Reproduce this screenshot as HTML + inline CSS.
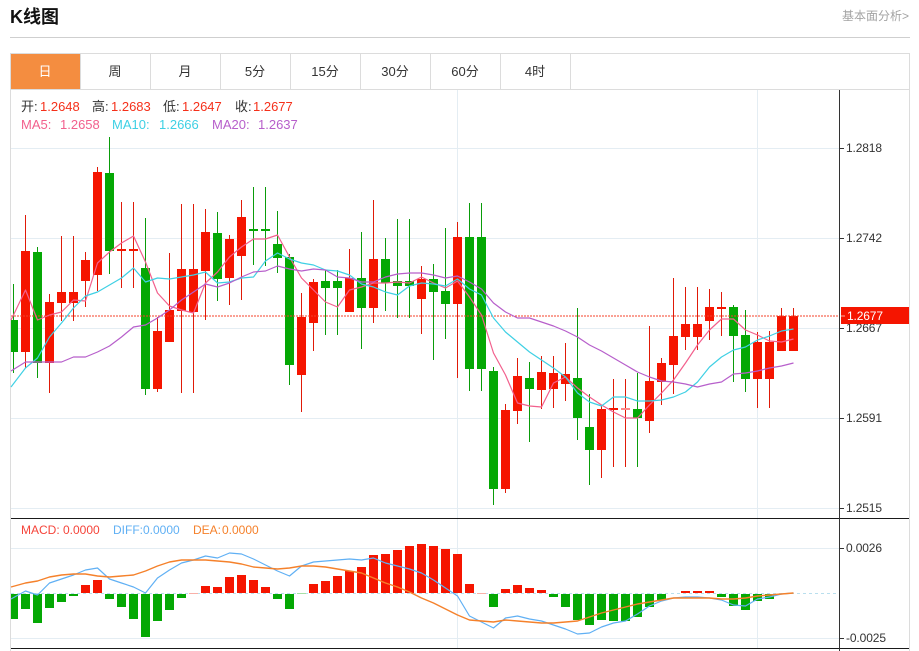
<!DOCTYPE html>
<html lang="zh">
<head>
<meta charset="utf-8">
<title>K线图</title>
<style>
html,body{margin:0;padding:0;background:#fff;width:919px;height:651px;overflow:hidden}
svg{display:block;position:absolute;left:0;top:0}
text{font-family:"Liberation Sans","Noto Sans CJK SC",sans-serif}
</style>
</head>
<body>
<svg width="919" height="651" viewBox="0 0 919 651" xmlns="http://www.w3.org/2000/svg">
<!-- header -->
<text x="10" y="23" font-size="18" font-weight="700" fill="#111">K线图</text>
<text x="842" y="20" font-size="12" fill="#a3a3a3">基本面分析&gt;</text>
<g shape-rendering="crispEdges">
<rect x="10" y="37" width="900" height="1" fill="#cfcfcf"/>
<!-- panel + tabs -->
<path d="M10.5 53V651M909.5 53V651M10 53.5H910M10 89.5H910M80.5 53V90M150.5 53V90M220.5 53V90M290.5 53V90M360.5 53V90M430.5 53V90M500.5 53V90M570.5 53V90" stroke="#dcdcdc" fill="none"/>
<rect x="11" y="54" width="69" height="35" fill="#f48d40"/>
<!-- grid -->
<path d="M11 148.5H839M11 238.5H839M11 328.5H839M11 418.5H839M11 508.5H839M11 548.5H839M11 638.5H839M457.5 90V648M757.5 90V648" stroke="#e4edf3" fill="none"/>
<!-- candles: wicks -->
<path fill="none" stroke="#e01a08" stroke-width="1" d="M25.5 215V368M49.5 294V393M61.5 236V321M73.5 236V321M85.5 252V307M97.5 167V291M121.5 202V288M133.5 202V288M157.5 317V392M169.5 253V342M181.5 204V393M193.5 204V393M205.5 209V320M229.5 235V305M241.5 200V300M301.5 293V412M313.5 279V351M349.5 249V312M373.5 200V323M421.5 266V334M457.5 222V378M505.5 404V493M517.5 358V424M541.5 356V409M553.5 356V408M565.5 343V401M601.5 406V478M613.5 379V467M625.5 379V467M649.5 326V433M661.5 358V405M673.5 278V394M685.5 287V350M697.5 287V350M709.5 289V340M721.5 292V336M757.5 332V408M769.5 331V408M781.5 308V351M793.5 308V351"/>
<path fill="none" stroke="#0a9c0a" stroke-width="1" d="M13.5 284V373M37.5 247V378M109.5 137V274M145.5 218V395M217.5 212V301M253.5 187V265M265.5 187V266M277.5 211V273M289.5 254V385M325.5 270V335M337.5 270V335M361.5 232V349M385.5 238V311M397.5 219V318M409.5 219V318M433.5 264V360M445.5 228V339M469.5 203V391M481.5 203V391M493.5 367V505M529.5 362V442M577.5 308V440M589.5 394V485M637.5 373V467M733.5 305V382M745.5 310V392"/>
<!-- candles: bodies -->
<path fill="none" stroke="#f51500" stroke-width="9" d="M25.5 251V352M49.5 302V363M61.5 292V303M73.5 292V303M85.5 260V281M97.5 172V275M121.5 249V251M133.5 249V251M157.5 331V389M169.5 310V342M181.5 269V311M193.5 269V312M205.5 232V271M229.5 239V278M241.5 217V256M301.5 317V375M313.5 282V323M349.5 278V312M373.5 259V308M421.5 279V299M457.5 237V304M505.5 410V489M517.5 376V411M541.5 372V390M553.5 373V389M565.5 374V384M601.5 409V450M613.5 408V410M649.5 381V421M661.5 363V382M673.5 336V365M685.5 324V337M697.5 324V337M709.5 307V321M721.5 307V309M757.5 342V379M769.5 342V379M781.5 316V351M793.5 316V351"/>
<path fill="none" stroke="#f88" stroke-width="9" d="M625.5 408V410"/>
<path fill="none" stroke="#04a804" stroke-width="9" d="M37.5 252V363M109.5 173V251M145.5 268V389M217.5 233V279M253.5 229V231M265.5 229V231M277.5 244V258M289.5 257V365M325.5 281V288M337.5 281V288M361.5 278V308M385.5 259V283M397.5 281V286M409.5 281V286M433.5 279V292M445.5 291V304M469.5 237V369M481.5 237V369M493.5 371V489M529.5 378V389M577.5 378V418M589.5 427V450M637.5 409V418M733.5 307V336M745.5 335V379"/>
<path fill="none" stroke="#04a804" stroke-width="7" d="M14.5 320V352"/>
<!-- MACD bars -->
<path fill="none" stroke="#b9dfee" stroke-dasharray="3 3" d="M11 593.5H836"/>
<path fill="none" stroke="#f51500" stroke-width="9" d="M85.5 585V593M97.5 580V593M205.5 586V593M217.5 587V593M229.5 577V593M241.5 575V593M253.5 580V593M265.5 587V593M313.5 584V593M325.5 581V593M337.5 576V593M349.5 571V593M361.5 567V593M373.5 555V593M385.5 554V593M397.5 550V593M409.5 546V593M421.5 544V593M433.5 546V593M445.5 549V593M457.5 554V593M469.5 584V593M505.5 589V593M517.5 585V593M529.5 588V593M541.5 590V593M685.5 591V593M697.5 591V593M709.5 591V593"/>
<path fill="none" stroke="#04a804" stroke-width="9" d="M25.5 594V609M37.5 594V623M49.5 594V608M61.5 594V602M73.5 594V596M109.5 594V599M121.5 594V607M133.5 594V619M145.5 594V637M157.5 594V621M169.5 594V610M181.5 594V598M277.5 594V599M289.5 594V609M493.5 594V607M553.5 594V597M565.5 594V607M577.5 594V620M589.5 594V625M601.5 594V620M613.5 594V621M625.5 594V621M637.5 594V617M649.5 594V607M661.5 594V600M721.5 594V597M733.5 594V606M745.5 594V610M757.5 594V601M769.5 594V599"/>
<path fill="none" stroke="#04a804" stroke-width="7" d="M14.5 594V619"/>
<path fill="none" stroke="#f9b0a8" stroke-width="9" d="M193.5 593H197M481.5 593H485" stroke-dasharray="none" opacity="0"/>
<path fill="none" stroke="#a6e0a6" d="M297 593.5H306"/>
<path fill="none" stroke="#f9b0a8" d="M189 593.5H198M477 593.5H486"/>
<!-- frame lines -->
<path d="M11 518.5H909M11 648.5H909" stroke="#1a1a1a" fill="none"/>
<path d="M839.5 90V651" stroke="#333" fill="none"/>
<path d="M839 148.5h5M839 238.5h5M839 328.5h5M839 418.5h5M839 508.5h5M839 548.5h5M839 638.5h5" stroke="#333" fill="none"/>
<path d="M11 316H839" stroke="#f4402a" stroke-dasharray="2 1" fill="none"/>
</g>
<!-- MA lines -->
<g fill="none" stroke-width="1.2" stroke-linejoin="round">
<polyline stroke="#f2608d" points="11,320 13.5,315 25.5,290 37.5,320 49.5,315 61.5,312 73.5,300 85.5,301 97.5,263 109.5,252 121.5,243 133.5,236 145.5,262 157.5,293 169.5,306 181.5,310 193.5,313 205.5,283 217.5,272 229.5,257 241.5,247 253.5,239 265.5,239 277.5,235 289.5,257 301.5,278 313.5,290 325.5,302 337.5,307 349.5,290 361.5,287 373.5,283 385.5,283 397.5,282 409.5,283 421.5,277 433.5,283 445.5,288 457.5,281 469.5,297 481.5,315 493.5,353 505.5,375 517.5,403 529.5,406 541.5,407 553.5,383 565.5,377 577.5,388 589.5,397 601.5,405 613.5,412 625.5,418 637.5,418 649.5,405 661.5,393 673.5,380 685.5,363 697.5,345 709.5,330 721.5,319 733.5,319 745.5,330 757.5,335 769.5,341 781.5,342 793.5,339"/>
<polyline stroke="#3fd0e4" points="11,387 25.5,368 37.5,358 49.5,337 61.5,323 73.5,308 85.5,296 97.5,292 109.5,285 121.5,278 133.5,268 145.5,282 157.5,278 169.5,279 181.5,277 193.5,275 205.5,272 217.5,283 229.5,282 241.5,278 253.5,277 265.5,261 277.5,253 289.5,259 301.5,263 313.5,265 325.5,270 337.5,271 349.5,275 361.5,284 373.5,287 385.5,292 397.5,295 409.5,286 421.5,283 433.5,284 445.5,286 457.5,279 469.5,289 481.5,295 493.5,318 505.5,332 517.5,342 529.5,352 541.5,360 553.5,368 565.5,377 577.5,393 589.5,402 601.5,406 613.5,397 625.5,397 637.5,401 649.5,401 661.5,400 673.5,397 685.5,392 697.5,382 709.5,367 721.5,357 733.5,350 745.5,347 757.5,340 769.5,336 781.5,331 793.5,329"/>
<polyline stroke="#b75fcb" points="11,371 25.5,362 37.5,362 49.5,362 61.5,362 73.5,357 85.5,357 97.5,352 109.5,346 121.5,337 133.5,327 145.5,325 157.5,318 169.5,310 181.5,300 193.5,292 205.5,284 217.5,287 229.5,283 241.5,277 253.5,272 265.5,271 277.5,266 289.5,269 301.5,271 313.5,269 325.5,270 337.5,277 349.5,278 361.5,282 373.5,282 385.5,277 397.5,274 409.5,273 421.5,273 433.5,275 445.5,278 457.5,276 469.5,282 481.5,289 493.5,303 505.5,312 517.5,318 529.5,318 541.5,322 553.5,326 565.5,331 577.5,337 589.5,345 601.5,351 613.5,358 625.5,365 637.5,372 649.5,377 661.5,381 673.5,382 685.5,384 697.5,387 709.5,384 721.5,382 733.5,374 745.5,373 757.5,371 769.5,368 781.5,366 793.5,363"/>
<polyline stroke="#60b0f4" points="11,599 25.5,591 37.5,595 49.5,583 61.5,579 73.5,575 85.5,570 97.5,568 109.5,579 121.5,583 133.5,587 145.5,593 157.5,578 169.5,570 181.5,563 193.5,560 205.5,556 217.5,558 229.5,553 241.5,554 253.5,559 265.5,565 277.5,571 289.5,576 301.5,566 313.5,562 325.5,561 337.5,560 349.5,559 361.5,560 373.5,558 385.5,563 397.5,566 409.5,569 421.5,573 433.5,580 445.5,588 457.5,596 469.5,616 481.5,622 493.5,628 505.5,618 517.5,616 529.5,619 541.5,621 553.5,625 565.5,629 577.5,634 589.5,633 601.5,627 613.5,623 625.5,621 637.5,614 649.5,606 661.5,601 673.5,598 685.5,597 697.5,597 709.5,598 721.5,600 733.5,605 745.5,606 757.5,599 769.5,597 781.5,594 793.5,593"/>
<polyline stroke="#f5812b" stroke-width="1.4" points="11,587 25.5,583 37.5,581 49.5,577 61.5,575 73.5,574 85.5,574 97.5,576 109.5,577 121.5,576 133.5,575 145.5,571 157.5,566 169.5,562 181.5,560 193.5,560 205.5,560 217.5,561 229.5,562 241.5,564 253.5,567 265.5,568 277.5,569 289.5,568 301.5,566 313.5,566 325.5,567 337.5,569 349.5,571 361.5,573 373.5,578 385.5,583 397.5,587 409.5,592 421.5,598 433.5,603 445.5,609 457.5,615 469.5,620 481.5,621 493.5,622 505.5,620 517.5,621 529.5,622 541.5,623 553.5,623 565.5,622 577.5,621 589.5,617 601.5,613 613.5,610 625.5,607 637.5,604 649.5,602 661.5,600 673.5,598 685.5,598 697.5,598 709.5,598 721.5,599 733.5,599 745.5,598 757.5,596 769.5,595 781.5,594 793.5,593"/>
</g>
<!-- tabs -->
<g font-size="13" fill="#333" text-anchor="middle">
<text x="45" y="76" fill="#fff">日</text>
<text x="115" y="76">周</text>
<text x="185" y="76">月</text>
<text x="255" y="76">5分</text>
<text x="325" y="76">15分</text>
<text x="395" y="76">30分</text>
<text x="465" y="76">60分</text>
<text x="535" y="76">4时</text>
</g>
<!-- legend -->
<g font-size="13">
<text x="21" y="111" fill="#333">开:</text><text x="40" y="111" fill="#f5301a">1.2648</text>
<text x="92" y="111" fill="#333">高:</text><text x="111" y="111" fill="#f5301a">1.2683</text>
<text x="163" y="111" fill="#333">低:</text><text x="182" y="111" fill="#f5301a">1.2647</text>
<text x="235" y="111" fill="#333">收:</text><text x="253" y="111" fill="#f5301a">1.2677</text>
<text x="21" y="129" fill="#f2608d">MA5:</text><text x="60" y="129" fill="#f2608d">1.2658</text>
<text x="112" y="129" fill="#3fd0e4">MA10:</text><text x="159" y="129" fill="#3fd0e4">1.2666</text>
<text x="212" y="129" fill="#b75fcb">MA20:</text><text x="258" y="129" fill="#b75fcb">1.2637</text>
<text x="21" y="534" font-size="12" fill="#f5443a">MACD:</text><text x="63" y="534" font-size="12" fill="#f5443a">0.0000</text>
<text x="113" y="534" font-size="12" fill="#60b0f4">DIFF:</text><text x="143" y="534" font-size="12" fill="#60b0f4">0.0000</text>
<text x="193" y="534" font-size="12" fill="#f5812b">DEA:</text><text x="222" y="534" font-size="12" fill="#f5812b">0.0000</text>
</g>
<!-- axis labels -->
<g font-size="12" fill="#333">
<text x="846" y="152" textLength="36">1.2818</text>
<text x="846" y="242" textLength="36">1.2742</text>
<text x="846" y="332" textLength="36">1.2667</text>
<text x="846" y="422" textLength="36">1.2591</text>
<text x="846" y="512" textLength="36">1.2515</text>
<text x="846" y="552" textLength="36">0.0026</text>
<text x="846" y="642" textLength="40">-0.0025</text>
</g>
<rect x="841" y="307" width="68" height="17" fill="#f51500" shape-rendering="crispEdges"/>
<path d="M841 316h4" stroke="#ffb0a0" fill="none" shape-rendering="crispEdges"/>
<text x="847" y="320" font-size="12" fill="#fff" textLength="36">1.2677</text>
</svg>
</body>
</html>
